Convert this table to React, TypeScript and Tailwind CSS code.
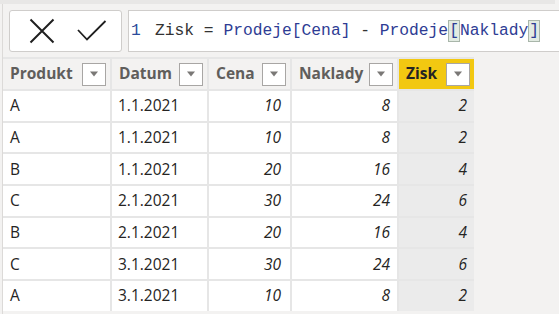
import { useMemo } from 'react';

type Row = {
  produkt: string;
  datum: string;
  cena: number;
  naklady: number;
};

const rows: Row[] = [
  { produkt: 'A', datum: '1.1.2021', cena: 10, naklady: 8 },
  { produkt: 'A', datum: '1.1.2021', cena: 10, naklady: 8 },
  { produkt: 'B', datum: '1.1.2021', cena: 20, naklady: 16 },
  { produkt: 'C', datum: '2.1.2021', cena: 30, naklady: 24 },
  { produkt: 'B', datum: '2.1.2021', cena: 20, naklady: 16 },
  { produkt: 'C', datum: '3.1.2021', cena: 30, naklady: 24 },
  { produkt: 'A', datum: '3.1.2021', cena: 10, naklady: 8 },
];

const sans = 'font-["Segoe_UI","Open_Sans",sans-serif]';

function FilterButton() {
  return (
    <span className="flex h-[23px] w-[24px] shrink-0 items-center justify-center border border-[#a8a6a4] bg-white">
      <svg width="10" height="6" viewBox="0 0 10 6">
        <path d="M1 0.5 L9 0.5 L5 5.5 Z" fill="#7a7876" />
      </svg>
    </span>
  );
}

function HeaderCell({ label, active }: { label: string; active?: boolean }) {
  return (
    <div
      className={`flex h-[30px] items-center justify-between pl-[7px] pr-[4px] ${
        active ? 'bg-[#f2c811] text-[#252423]' : 'bg-[#f3f2f1] text-[#605e5c]'
      }`}
    >
      <span className="text-[15.5px] font-bold">{label}</span>
      <FilterButton />
    </div>
  );
}

export default function App() {
  const data = useMemo(() => rows.map((r) => ({ ...r, zisk: r.cena - r.naklady })), []);

  return (
    <div className={`h-[314px] w-[559px] overflow-hidden bg-[#f3f2f1] ${sans}`}>
      <div className="h-[4px] w-[555px] bg-[#e8e7e6]" />
      <div className="ml-[2px] h-[310px] border-l border-[#dcdad8]">
        {/* formula bar */}
        <div className="flex gap-[6px] pl-[6px] pt-[6px]">
          <div className="flex h-[42px] w-[113px] items-center gap-[22px] rounded-[3px] border border-[#cfcdcb] bg-white pl-[19px]">
            <svg width="26" height="26" viewBox="0 0 26 26">
              <path d="M1.5 1.5 L24.5 24.5 M24.5 1.5 L1.5 24.5" stroke="#1f1f1f" strokeWidth="2" />
            </svg>
            <svg width="30" height="22" viewBox="0 0 30 22">
              <path d="M1 10 L10 19.5 L28.5 1" stroke="#1f1f1f" strokeWidth="1.8" fill="none" />
            </svg>
          </div>
          <div className="flex h-[42px] flex-1 items-center border-y border-l border-[#cfcdcb] bg-white pl-[2px] font-['Liberation_Mono',monospace] text-[16.3px] whitespace-pre">
            <span className="w-[24px] text-[#2b4c9b]">1</span>
            <span className="text-[#333333]">Zisk = </span>
            <span className="text-[#2e3c94]">Prodeje[Cena]</span>
            <span className="text-[#333333]"> - </span>
            <span className="text-[#2e3c94]">Prodeje</span>
            <span className="border border-[#a9b6aa] bg-[#e2ebe2] text-[#2e3c94] leading-[20px]">[</span>
            <span className="text-[#2e3c94]">Naklady</span>
            <span className="border border-[#a9b6aa] bg-[#e2ebe2] text-[#2e3c94] leading-[20px]">]</span>
          </div>
        </div>

        {/* table */}
        <div className="mt-[5px] grid w-[471px] grid-cols-[107px_95px_81px_105px_75px] gap-[2px] border-t-2 border-[#e6e6e6] bg-[#e6e6e6]">
          <HeaderCell label="Produkt" />
          <HeaderCell label="Datum" />
          <HeaderCell label="Cena" />
          <HeaderCell label="Naklady" />
          <HeaderCell label="Zisk" active />
          {data.map((r, i) => (
            <div key={i} className="contents text-[15.5px] text-[#252423]">
              <div className="flex h-[29.7px] items-center bg-white pl-[7px]">{r.produkt}</div>
              <div className="flex h-[29.7px] items-center bg-white pl-[6px]">{r.datum}</div>
              <div className="flex h-[29.7px] items-center justify-end bg-white pr-[9px] italic">{r.cena}</div>
              <div className="flex h-[29.7px] items-center justify-end bg-white pr-[7px] italic">{r.naklady}</div>
              <div className="flex h-[29.7px] items-center justify-end bg-[#ebebeb] pr-[7px] italic">{r.zisk}</div>
            </div>
          ))}
        </div>
      </div>
    </div>
  );
}
